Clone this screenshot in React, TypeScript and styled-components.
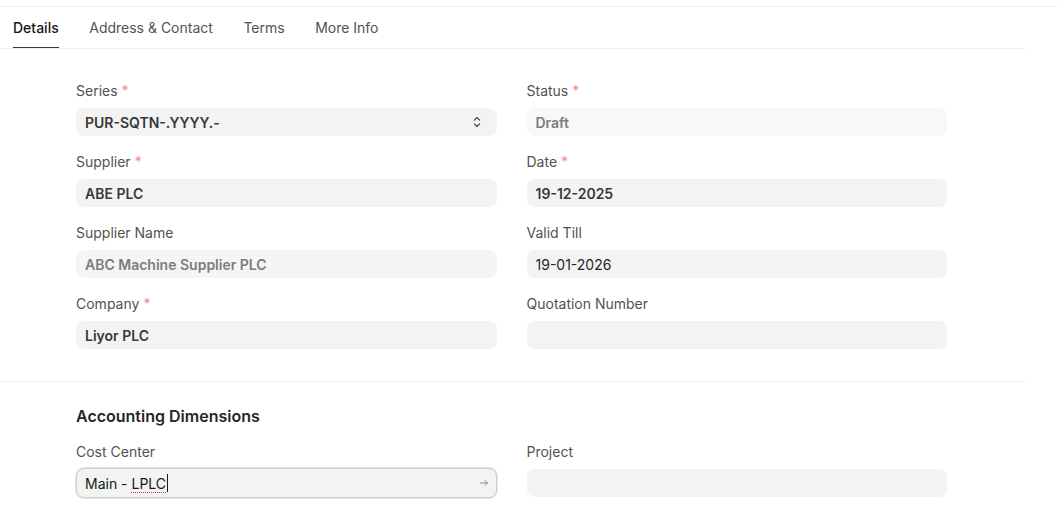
import styled, { createGlobalStyle } from "styled-components";

const GlobalStyle = createGlobalStyle`
  body {
    margin: 0;
    background: #ffffff;
    font-family: Inter, "Noto Sans", sans-serif;
    color: #383838;
  }
`;

interface Field {
  label: string;
  value?: string;
  required?: boolean;
  plain?: boolean;
  kind?: "link" | "select" | "readonly" | "disabled";
}

const tabs = ["Details", "Address & Contact", "Terms", "More Info"];

const leftFields: Field[] = [
  { label: "Series", value: "PUR-SQTN-.YYYY.-", required: true, kind: "select" },
  { label: "Supplier", value: "ABE PLC", required: true },
  { label: "Supplier Name", value: "ABC Machine Supplier PLC", kind: "readonly" },
  { label: "Company", value: "Liyor PLC", required: true },
];

const rightFields: Field[] = [
  { label: "Status", value: "Draft", required: true, kind: "disabled" },
  { label: "Date", value: "19-12-2025", required: true },
  { label: "Valid Till", value: "19-01-2026", plain: true },
  { label: "Quotation Number" },
];

const SelectArrows = () => (
  <svg width="10" height="14" viewBox="0 0 10 14" fill="none">
    <path d="M2.5 5L5 2.5L7.5 5" stroke="#525252" strokeWidth="1.3" strokeLinecap="round" strokeLinejoin="round" />
    <path d="M2.5 9L5 11.5L7.5 9" stroke="#525252" strokeWidth="1.3" strokeLinecap="round" strokeLinejoin="round" />
  </svg>
);

const LinkArrow = () => (
  <svg width="10" height="10" viewBox="0 0 10 10" fill="none">
    <path d="M1.5 5H8.5M6 2.5L8.5 5L6 7.5" stroke="#8a8a8a" strokeWidth="1" strokeLinecap="round" strokeLinejoin="round" />
  </svg>
);

const FieldBlock = ({ field }: { field: Field }) => (
  <Control>
    <Label>
      {field.label}
      {field.required && <Req>*</Req>}
    </Label>
    <Input $kind={field.kind}>
      <Value $kind={field.kind} $plain={field.plain}>
        {field.value}
      </Value>
      {field.kind === "select" && <SelectArrows />}
    </Input>
  </Control>
);

const App = () => {
  return (
    <>
      <GlobalStyle />
      <TopStrip />
      <Page>
        <TabBar>
          {tabs.map((t, i) => (
            <Tab key={t} $active={i === 0}>
              {t}
            </Tab>
          ))}
        </TabBar>

        <Section>
          <Grid>
            <Column>
              {leftFields.map((f) => (
                <FieldBlock key={f.label} field={f} />
              ))}
            </Column>
            <Column>
              {rightFields.map((f) => (
                <FieldBlock key={f.label} field={f} />
              ))}
            </Column>
          </Grid>
        </Section>

        <Section $last>
          <SectionHead>Accounting Dimensions</SectionHead>
          <Grid>
            <Column>
              <Control>
                <Label>Cost Center</Label>
                <FocusedInput>
                  <EditText>
                    Main - <Misspelled>LPLC</Misspelled>
                    <Caret />
                  </EditText>
                  <LinkArrow />
                </FocusedInput>
              </Control>
            </Column>
            <Column>
              <Control>
                <Label>Project</Label>
                <Input />
              </Control>
            </Column>
          </Grid>
        </Section>
      </Page>
    </>
  );
};

const TopStrip = styled.div`
  height: 6px;
  border-bottom: 1px solid #ededed;
`;

const Page = styled.div`
  width: 1025px;
`;

const TabBar = styled.div`
  display: flex;
  gap: 30.5px;
  padding-left: 13px;
  border-bottom: 1px solid #ededed;
`;

const Tab = styled.div<{ $active?: boolean }>`
  height: 41px;
  display: flex;
  align-items: center;
  padding-top: 1px;
  box-sizing: border-box;
  font-size: 14px;
  font-weight: ${(p) => (p.$active ? 500 : 400)};
  color: ${(p) => (p.$active ? "#171717" : "#525252")};
  border-bottom: 1px solid ${(p) => (p.$active ? "#383838" : "transparent")};
`;

const Section = styled.div<{ $last?: boolean }>`
  padding: ${(p) => (p.$last ? "23px 78px 24px 76px" : "32px 78px 16px 76px")};
  border-bottom: ${(p) => (p.$last ? "none" : "1px solid #ededed")};
`;

const SectionHead = styled.div`
  font-size: 16px;
  line-height: 22px;
  font-weight: 600;
  color: #262626;
  margin-bottom: 15px;
`;

const Grid = styled.div`
  display: grid;
  grid-template-columns: 1fr 1fr;
  column-gap: 30px;
`;

const Column = styled.div`
  display: flex;
  flex-direction: column;
`;

const Control = styled.div`
  margin-bottom: 16px;
`;

const Label = styled.div`
  font-size: 14px;
  line-height: 20px;
  color: #525252;
  margin-bottom: 7px;
`;

const Req = styled.span`
  color: #f58a8a;
  margin-left: 4px;
`;

const Input = styled.div<{ $kind?: Field["kind"] }>`
  height: 28px;
  box-sizing: border-box;
  border-radius: 8px;
  background: ${(p) =>
    p.$kind === "disabled" ? "#f8f8f8" : p.$kind === "readonly" ? "#f5f5f5" : "#f3f3f3"};
  padding: 0 15px 0 9px;
  display: flex;
  align-items: center;
  justify-content: space-between;
`;

const Value = styled.span<{ $kind?: Field["kind"]; $plain?: boolean }>`
  font-size: 14px;
  font-weight: ${(p) => (p.$plain ? 400 : 600)};
  color: ${(p) =>
    p.$kind === "disabled" || p.$kind === "readonly" ? "#7c7c7c" : p.$plain ? "#262626" : "#383838"};
`;

const FocusedInput = styled.div`
  height: 30px;
  margin-top: -1px;
  box-sizing: border-box;
  border-radius: 8px;
  background: #f3f3f3;
  border: 1px solid #cfcfcf;
  box-shadow: 0 0 0 1px #e6e6e6;
  padding: 0 7px 0 8px;
  display: flex;
  align-items: center;
  justify-content: space-between;
`;

const EditText = styled.span`
  font-size: 14px;
  color: #171717;
  display: flex;
  align-items: center;
  white-space: pre;
`;

const Misspelled = styled.span`
  text-decoration: underline dotted #e03131;
  text-decoration-thickness: 1px;
  text-underline-offset: 3px;
`;

const Caret = styled.span`
  width: 1px;
  height: 18px;
  background: #171717;
  margin-left: 1px;
`;

export default App;
